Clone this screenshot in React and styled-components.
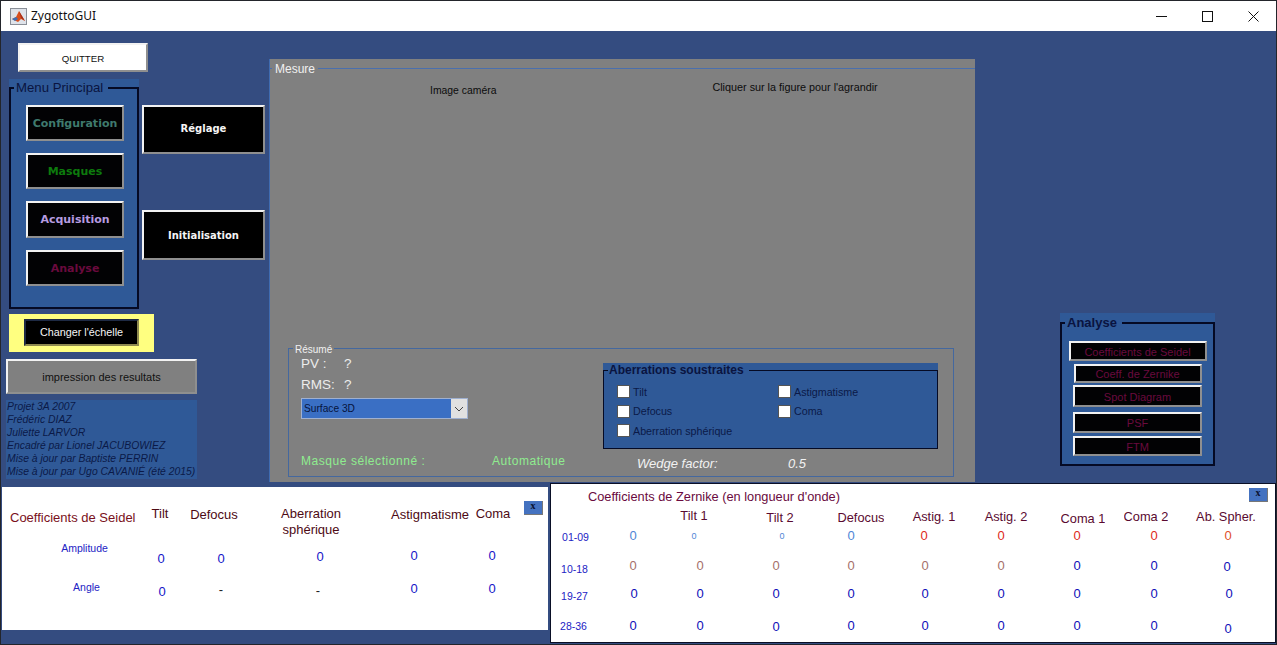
import React from "react";
import styled, { createGlobalStyle } from "styled-components";

const Global = createGlobalStyle`
  html, body { margin: 0; padding: 0; background: #fff; }
  body { font-family: "Liberation Sans", Arial, sans-serif; }
  * { box-sizing: border-box; }
`;

const Win = styled.div`
  width: 1277px; height: 645px; display: flex; flex-direction: column;
  border: 1px solid #23252b; overflow: hidden; background: #344c80;
`;
const TitleBar = styled.div`
  height: 30px; flex: none; background: #fff; display: flex; align-items: center;
  padding-left: 9px; font: 12px "Noto Sans", sans-serif; color: #111;
`;
const TitleText = styled.span` margin-left: 4px; margin-top: -1px; `;
const WinControls = styled.div` margin-left: auto; display: flex; `;
const WinBtn = styled.div`
  width: 46px; height: 30px; display: flex; align-items: center; justify-content: center;
`;
const Main = styled.div` flex: 1; display: flex; flex-direction: column; min-height: 0; `;
const TopRow = styled.div` height: 452px; flex: none; display: flex; `;
const LeftCol = styled.div` width: 268px; flex: none; display: flex; flex-direction: column; `;

const Bevel = styled.div`
  display: flex; align-items: center; justify-content: center; text-align: center; flex: none;
  border-style: solid; border-width: 2px;
  border-color: #f2f2f2 #8f8f8f #8f8f8f #f2f2f2;
`;
const QuitBtn = styled(Bevel)`
  width: 130px; height: 29px; margin: 12px 0 0 17px; padding-top: 2px; background: #fff; color: #111; font-size: 9.7px;
`;
const MenuRow = styled.div` display: flex; margin: 7px 0 0 8px; `;
const Group = styled.div`
  position: relative; flex: none; background: #2f5997; padding-top: ${p => p.$top}px;
  width: ${p => p.$w}px; height: ${p => p.$h}px;
`;
const GroupBox = styled.div`
  height: 100%; border: 2px solid #050a24; display: flex; flex-direction: column;
  padding: ${p => p.$pad};
`;
const GroupTitle = styled.div`
  position: absolute; left: 5px; top: ${p => p.$t || 0}px; padding: 0 ${p => p.$pr || 4}px 0 2px; background: #2f5997; color: #0a1440;
  font-size: ${p => p.$size}px; font-weight: ${p => p.$weight || 400}; line-height: 17px;
`;
const MenuBtn = styled(Bevel)`
  width: 98px; height: ${p => p.$h}px; margin-top: ${p => p.$mt}px; background: #020204; color: ${p => p.$c};
  font: bold 11px "DejaVu Sans", sans-serif; padding-top: ${p => p.$pt || 0}px;
`;
const SideCol = styled.div` display: flex; flex-direction: column; margin: 26px 0 0 3px; `;
const SideBtn = styled(Bevel)`
  width: 123px; height: ${p => p.$h}px; margin-top: ${p => p.$mt}px; padding-bottom: ${p => p.$pb || 0}px; background: #000; color: #f5f5f5;
  font: bold 10px "DejaVu Sans", sans-serif;
`;
const Yellow = styled.div`
  width: 145px; height: 38px; margin: 5px 0 0 8px; background: #ffff80;
  display: flex; align-items: center; padding-left: 15px;
`;
const ScaleBtn = styled(Bevel)`
  width: 115px; height: 27px; margin-bottom: 2px; background: #000; color: #f5f5f5; font-size: 10.8px;
  border-color: #1e2a44 #8f8a50 #8f8a50 #1e2a44; 
`;
const PrintBtn = styled(Bevel)`
  width: 191px; height: 35px; margin: 7px 0 0 5px; background: #808080; color: #111; font-size: 11px;
`;
const Credits = styled.div`
  width: 191px; height: 79px; margin: 6px 0 0 5px; background: #2f5997; color: #0b1a48;
  font-size: 10.4px; font-style: italic; line-height: 13px; padding: 0 0 0 1px; white-space: nowrap;
`;

const Mesure = styled.div`
  width: 706px; height: 423px; margin-top: 28px; background: #808080; border-left: 1px solid #3f6bb0;
  position: relative; display: flex; flex-direction: column; flex: none;
`;
const MesureHead = styled.div`
  height: 10px; flex: none; border-bottom: 1px solid #4a6fae;
`;
const MesureTitle = styled.div`
  position: absolute; left: 2px; top: 3px; padding: 0 3px; background: #808080; color: #f0f0f0; font-size: 12px; line-height: 15px;
`;
const HintRow = styled.div`
  display: flex; color: #0c0c0c; height: 30px; flex: none;
`;
const Hint = styled.span`
  margin-left: ${p => p.$ml}px; margin-top: ${p => p.$mt}px; white-space: nowrap; font-size: ${p => p.$s}px;
`;
const Resume = styled.div`
  margin: auto 21px 5px 18px; height: 129px; border: 1px solid #44689f; position: relative; flex: none;
  display: flex; flex-direction: column;
`;
const ResumeTitle = styled.div`
  position: absolute; left: 4px; top: -5px; padding: 0 2px; background: #808080; color: #f0f0f0; font-size: 10px; line-height: 12px;
`;
const ResumeTop = styled.div` display: flex; height: 99px; flex: none; padding-left: 12px; `;
const ResumeLeft = styled.div` width: 302px; flex: none; display: flex; flex-direction: column; `;
const StatLine = styled.div`
  display: flex; color: #ececec; font-size: 13.5px; line-height: 16px; margin-top: ${p => p.$mt}px;
`;
const StatLabel = styled.span` width: 43px; `;
const SelectBox = styled.div`
  width: 167px; height: 21px; margin-top: 5px; display: flex; background: #3a6fc4; color: #06143c;
  font-size: 10.2px; align-items: center; padding-left: 2px; border: 1px solid #9fb0d0;
`;
const SelectText = styled.span` flex: 1; `;
const SelectArrow = styled.div`
  width: 16px; align-self: stretch; background: #e1e1e1; display: flex; align-items: center; justify-content: center; color: #333;
`;
const SubGroup = styled.div`
  position: relative; width: 335px; height: 86px; margin-top: 14px; background: #2f5997; padding-top: 7px; flex: none;
`;
const SubBox = styled.div`
  height: 79px; border: 1px solid #050a24; display: grid;
  grid-template-columns: 161px 1fr; grid-auto-rows: 19.5px; padding: 11px 0 0 13px;
`;
const SubTitle = styled.div`
  position: absolute; left: 5px; top: 0; padding: 0 5px 0 1px; background: #2f5997; color: #0a1440; font-size: 12px; font-weight: 700; line-height: 15px; white-space: nowrap;
`;
const CheckRow = styled.div`
  display: flex; align-items: center; color: #0b1a48; font-size: 10.7px; white-space: nowrap;
`;
const Box = styled.span`
  width: 13px; height: 13px; background: #fff; border: 1px solid #555; margin-right: 3px; flex: none;
`;
const ResumeBottom = styled.div`
  display: flex; align-items: center; height: 26px; flex: none; padding-left: 12px; white-space: nowrap;
`;
const GreenText = styled.span`
  color: #8fec8f; font-size: 12px; letter-spacing: 0.55px; width: ${p => p.$w}px; flex: none;
`;
const WedgeText = styled.span`
  color: #f2f2f2; font-size: 13px; font-style: italic; width: ${p => p.$w}px; flex: none; margin-top: 4px;
`;

const RightCol = styled.div` flex: 1; padding: 282px 0 0 85px; `;
const AnalyseBtn = styled(Bevel)`
  align-self: center; flex: none; padding-top: 1px;
  width: ${p => p.$w}px; height: ${p => p.$h}px; margin-top: ${p => p.$mt}px;
  background: #020204; color: #6a0a3e; font-size: 11px;
`;

const BottomRow = styled.div` flex: 1; display: flex; min-height: 0; align-items: flex-start; `;
const SeidelPanel = styled.div`
  width: 546px; height: 143px; margin: 4px 0 0 1px; background: #fff; position: relative; padding-top: 12px; flex: none;
`;
const ZernikePanel = styled.div`
  width: 726px; height: 160px; margin-left: 2px; background: #fff; border: 1px solid #0a0f26; position: relative; flex: none;
`;
const CloseBtn = styled.div`
  position: absolute; top: ${p => p.$t}px; right: ${p => p.$r}px; width: 19px; height: 14px; background: #4472c0;
  border-right: 1px solid #777; border-bottom: 1px solid #777;
  color: #0a1030; font: bold 10px "Liberation Serif", serif; text-align: center; line-height: 10px;
`;
const Row = styled.div`
  display: grid; grid-template-columns: ${p => p.$cols}; height: ${p => p.$h}px; margin-top: ${p => p.$mt}px; align-items: center;
`;
const Cell = styled.div`
  justify-self: center; text-align: center; white-space: nowrap;
  color: ${p => p.$c}; font-size: ${p => p.$s || 13}px; line-height: 16px;
  transform: translate(${p => p.$dx || 0}px, ${p => p.$dy || 0}px);
  ${p => p.$clip ? "height: 13px; overflow: hidden;" : ""}
`;
const LeftCell = styled(Cell)` justify-self: start; padding-left: 8px; `;
const TwoLines = styled(Cell)` align-self: start; `;
const ZTitle = styled.div`
  color: #6a0a40; font-size: 12.8px; padding: 5px 0 0 37px; line-height: 16px;
`;

const SCOLS = "131px 56px 58px 138px 74px 68px";
const ZCOLS = "49px 66px 68px 84px 66px 82px 70px 82px 72px 76px";
const HEAD = "#4d0a14", BLUE = "#1616c8", ROW = "#2222c4";
const LB = "#4f86d6", RED = "#dd2a20", BR = "#a5706a", NV = "#1010b8", ZH = "#5a0a30";

const zHeaders = [
  ["Tilt 1", -6, 0], ["Tilt 2", 4, 0, 1], ["Defocus", 10, 0, 1], ["Astig. 1", 9, 1], ["Astig. 2", 5, 1],
  ["Coma 1", 6, 1, 1], ["Coma 2", -8, -1, 1], ["Ab. Spher.", -2, 1],
];
const zRows = [
  { label: "01-09", ly: 1, mt: 6, vals: [[0,0,LB],[-6,0,LB,9],[6,0,LB,9],[0,0,LB],[-1,0,RED],[0,0,RED],[0,0,RED],[0,0,RED],[0,0,"#e0502a"]] },
  { label: "10-18", ly: 3, mt: 14, dx: -1, vals: [[0,0,BR],[0,0,BR],[0,0,BR],[0,0,BR],[0,0,BR],[0,0,BR],[0,0,NV],[0,0,NV],[-1,1,NV]] },
  { label: "19-27", ly: 2, mt: 12, dx: -1, vals: [[1,0,NV],[0,0,NV],[0,0,NV],[0,0,NV],[0,0,NV],[0,0,NV],[0,0,NV],[0,0,NV],[1,0,NV]] },
  { label: "28-36", ly: 0, mt: 16, dx: -2, vals: [[0,0,NV],[0,0,NV],[0,1,NV],[0,0,NV],[0,0,NV],[0,0,NV],[0,0,NV],[0,0,NV],[0,3,NV]] },
];

function MatlabIcon() {
  return (
    <svg width="17" height="17" viewBox="0 0 17 17">
      <rect x="0.5" y="0.5" width="16" height="16" fill="#dfe3ea" stroke="#8a8f98" />
      <path d="M2 11 L6 9 L9 3 L12 8 L15 13 L11 11 L8 14 Z" fill="#d9501e" />
      <path d="M2 11 L6 9 L8 11 L5 13 Z" fill="#3f6fb5" />
      <path d="M9 3 L11 10 L15 13 L12 8 Z" fill="#a8301a" />
    </svg>
  );
}

export default function App() {
  return (
    <>
      <Global />
      <Win>
        <TitleBar>
          <MatlabIcon />
          <TitleText>ZygottoGUI</TitleText>
          <WinControls>
            <WinBtn><svg width="11" height="11"><path d="M0 5.5H11" stroke="#111" /></svg></WinBtn>
            <WinBtn><svg width="11" height="11"><rect x=".5" y=".5" width="10" height="10" fill="none" stroke="#111" /></svg></WinBtn>
            <WinBtn><svg width="11" height="11"><path d="M.5 .5L10.5 10.5M10.5 .5L.5 10.5" stroke="#111" /></svg></WinBtn>
          </WinControls>
        </TitleBar>
        <Main>
          <TopRow>
            <LeftCol>
              <QuitBtn>QUITTER</QuitBtn>
              <MenuRow>
                <Group $w={130} $h={230} $top={8}>
                  <GroupTitle $size={13.2} $pr={5}>Menu Principal</GroupTitle>
                  <GroupBox $pad="0 0 0 15px">
                    <MenuBtn $h={36} $mt={16} $c="#3f7a6e">Configuration</MenuBtn>
                    <MenuBtn $h={36} $mt={12} $c="#0d7a0d" $pt={1}>Masques</MenuBtn>
                    <MenuBtn $h={37} $mt={12} $c="#b79be0">Acquisition</MenuBtn>
                    <MenuBtn $h={36} $mt={12} $c="#6a0a3e" $pt={1}>Analyse</MenuBtn>
                  </GroupBox>
                </Group>
                <SideCol>
                  <SideBtn $h={49} $mt={0} $pb={2}>Réglage</SideBtn>
                  <SideBtn $h={50} $mt={56}>Initialisation</SideBtn>
                </SideCol>
              </MenuRow>
              <Yellow><ScaleBtn>Changer l'échelle</ScaleBtn></Yellow>
              <PrintBtn>impression des resultats</PrintBtn>
              <Credits>
                <div>Projet 3A 2007</div>
                <div>Frédéric DIAZ</div>
                <div>Juliette LARVOR</div>
                <div>Encadré par Lionel JACUBOWIEZ</div>
                <div>Mise à jour par Baptiste PERRIN</div>
                <div>Mise à jour par Ugo CAVANIÉ (été 2015)</div>
              </Credits>
            </LeftCol>
            <Mesure>
              <MesureHead />
              <MesureTitle>Mesure</MesureTitle>
              <HintRow>
                <Hint $ml={160} $mt={16} $s={10.4}>Image caméra</Hint>
                <Hint $ml={216} $mt={12} $s={10.8}>Cliquer sur la figure pour l'agrandir</Hint>
              </HintRow>
              <Resume>
                <ResumeTitle>Résumé</ResumeTitle>
                <ResumeTop>
                  <ResumeLeft>
                    <StatLine $mt={7}><StatLabel>PV :</StatLabel><span>?</span></StatLine>
                    <StatLine $mt={5}><StatLabel>RMS:</StatLabel><span>?</span></StatLine>
                    <SelectBox>
                      <SelectText>Surface 3D</SelectText>
                      <SelectArrow>
                        <svg width="10" height="6" viewBox="0 0 10 6"><path d="M1 1L5 5L9 1" fill="none" stroke="#444" /></svg>
                      </SelectArrow>
                    </SelectBox>
                  </ResumeLeft>
                  <SubGroup>
                    <SubTitle>Aberrations soustraites</SubTitle>
                    <SubBox>
                      <CheckRow><Box />Tilt</CheckRow>
                      <CheckRow><Box />Astigmatisme</CheckRow>
                      <CheckRow><Box />Defocus</CheckRow>
                      <CheckRow><Box />Coma</CheckRow>
                      <CheckRow><Box />Aberration sphérique</CheckRow>
                    </SubBox>
                  </SubGroup>
                </ResumeTop>
                <ResumeBottom>
                  <GreenText $w={191}>Masque sélectionné :</GreenText>
                  <GreenText $w={145}>Automatique</GreenText>
                  <WedgeText $w={151}>Wedge factor:</WedgeText>
                  <WedgeText $w={40}>0.5</WedgeText>
                </ResumeBottom>
              </Resume>
            </Mesure>
            <RightCol>
              <Group $w={155} $h={153} $top={9}>
                <GroupTitle $size={13} $weight={700} $pr={5} $t={1}>Analyse</GroupTitle>
                <GroupBox $pad="0">
                  <AnalyseBtn $w={138} $h={20} $mt={17}>Coefficients de Seidel</AnalyseBtn>
                  <AnalyseBtn $w={128} $h={19} $mt={3}>Coeff. de Zernike</AnalyseBtn>
                  <AnalyseBtn $w={129} $h={22} $mt={2}>Spot Diagram</AnalyseBtn>
                  <AnalyseBtn $w={129} $h={21} $mt={5}>PSF</AnalyseBtn>
                  <AnalyseBtn $w={129} $h={20} $mt={3}>FTM</AnalyseBtn>
                </GroupBox>
              </Group>
            </RightCol>
          </TopRow>
          <BottomRow>
            <SeidelPanel>
              <CloseBtn $t={14} $r={5}>x</CloseBtn>
              <Row $cols={SCOLS} $h={16} $mt={0}>
                <LeftCell $c="#7a1020" $dy={3}>Coefficients de Seidel</LeftCell>
                <Cell $c={HEAD} $dx={-1} $dy={-1}>Tilt</Cell>
                <Cell $c={HEAD} $dx={-4}>Defocus</Cell>
                <TwoLines $c={HEAD} $dx={-5} $dy={7}>Aberration<br />sphérique</TwoLines>
                <Cell $c={HEAD} $dx={8}>Astigmatisme</Cell>
                <Cell $c={HEAD} $dy={-1}>Coma</Cell>
              </Row>
              <Row $cols={SCOLS} $h={24} $mt={30}>
                <Cell $c={ROW} $s={10.5} $dx={17} $dy={-9}>Amplitude</Cell>
                <Cell $c={BLUE} $dy={2}>0</Cell>
                <Cell $c={BLUE} $dx={3} $dy={2}>0</Cell>
                <Cell $c={BLUE} $dx={4}>0</Cell>
                <Cell $c={BLUE} $dx={-8} $dy={-1}>0</Cell>
                <Cell $c={BLUE} $dx={-1} $dy={-1}>0</Cell>
              </Row>
              <Row $cols={SCOLS} $h={24} $mt={9}>
                <Cell $c={ROW} $s={10.5} $dx={19} $dy={-3}>Angle</Cell>
                <Cell $c={BLUE} $dx={1} $dy={2}>0</Cell>
                <Cell $c={"#222"} $dx={3}>-</Cell>
                <Cell $c={"#222"} $dx={2} $dy={1}>-</Cell>
                <Cell $c={BLUE} $dx={-8} $dy={-1}>0</Cell>
                <Cell $c={BLUE} $dx={-1} $dy={-1}>0</Cell>
              </Row>
            </SeidelPanel>
            <ZernikePanel>
              <CloseBtn $t={4} $r={7}>x</CloseBtn>
              <ZTitle>Coefficients de Zernike (en longueur d'onde)</ZTitle>
              <Row $cols={ZCOLS} $h={14} $mt={3}>
                <span />
                <span />
                {zHeaders.map(([t, dx, dy, clip]) => (
                  <Cell key={t} $c={ZH} $s={12.8} $dx={dx} $dy={dy} $clip={clip}>{t}</Cell>
                ))}
              </Row>
              {zRows.map(r => (
                <Row key={r.label} $cols={ZCOLS} $h={16} $mt={r.mt}>
                  <Cell $c={ROW} $s={10.5} $dx={r.dx} $dy={r.ly}>{r.label}</Cell>
                  {r.vals.map(([dx, dy, c, s], i) => (
                    <Cell key={i} $c={c} $s={s || 13} $dx={dx} $dy={dy}>0</Cell>
                  ))}
                </Row>
              ))}
            </ZernikePanel>
          </BottomRow>
        </Main>
      </Win>
    </>
  );
}
